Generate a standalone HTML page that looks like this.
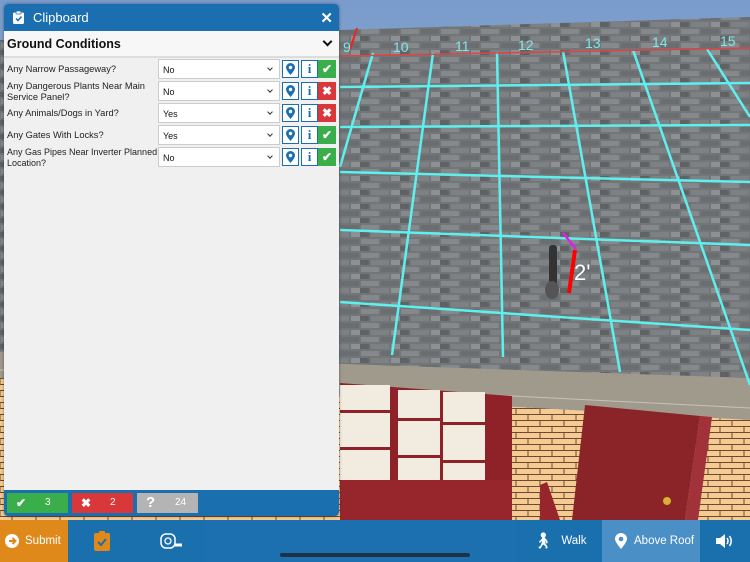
<!DOCTYPE html>
<html><head><meta charset="utf-8"><style>
*{box-sizing:border-box;margin:0;padding:0}
body{width:750px;height:562px;overflow:hidden;position:relative;font-family:"Liberation Sans",sans-serif;background:#888}
#bg{position:absolute;left:0;top:0}
.panel{position:absolute;left:4px;top:4px;width:335px;height:512px;background:#f0f0f0;border-radius:4px;overflow:hidden;box-shadow:0 0 3px rgba(0,0,0,.4)}
.hdr{height:27px;background:#1b6fb0;color:#fff;font-size:13px;display:flex;align-items:center;padding-left:9px}
.hdr .x{position:absolute;right:6px;top:5px;font-size:15px;font-weight:bold}
.sec{height:27px;background:#f7f7f7;border-bottom:2px solid #ddd;font-size:12.5px;font-weight:bold;display:flex;align-items:center;padding-left:3px;color:#111;position:relative}
.sec .ch{position:absolute;right:8px;top:7px;width:7px;height:7px;border-right:2px solid #111;border-bottom:2px solid #111;transform:rotate(45deg)}
.row{position:absolute;left:0;width:335px;height:22px}
.q{position:absolute;left:3px;font-size:9.3px;line-height:10.5px;color:#222;width:152px}
.sel{position:absolute;left:154px;top:1px;width:122px;height:20px;background:#fff;border:1px solid #ccc;font-size:9px;padding:5px 0 0 4px;color:#111}
.sel:after{content:"";position:absolute;right:7px;top:6px;width:3px;height:3px;border-right:1.5px solid #333;border-bottom:1.5px solid #333;transform:rotate(45deg)}
.b{position:absolute;top:2px;width:17px;height:18px;border:1.5px solid #1b6fb0;background:#fff;color:#1b6fb0;font-weight:bold;text-align:center;font-size:13px;line-height:15px;font-family:"Liberation Serif",serif}
.b svg{margin-top:2px}
.st{position:absolute;left:314px;top:2px;width:18px;height:18px;color:#fff;font-weight:bold;text-align:center;font-size:12px;line-height:18px}
.ok{background:#3aae4a}.no{background:#d9373a}
.foot{position:absolute;left:0;bottom:0;width:335px;height:26px;background:#1a70ae}
.fb{position:absolute;top:3px;height:20px;width:61px;color:#fff;font-size:10px;line-height:20px}
.fb i{font-style:normal;position:absolute;left:9px;font-weight:bold;font-size:12px}
.fb span{position:absolute;left:38px}
.bar{position:absolute;left:0;top:520px;width:750px;height:42px;background:#1a6fad;color:#fff;font-size:11.5px}
.bar div{position:absolute;top:0;height:42px;display:flex;align-items:center}
</style></head><body>
<svg id="bg" width="750" height="562" viewBox="0 0 750 562">
<defs>
<linearGradient id="sky" x1="0" y1="0" x2="0" y2="1"><stop offset="0" stop-color="#7a9ccc"/><stop offset="1" stop-color="#a9c0de"/></linearGradient>
<pattern id="sh" width="40" height="14" patternUnits="userSpaceOnUse"><rect width="40" height="14" fill="#727679"/><rect x="1" y="1" width="18" height="5" fill="#85898c"/><rect x="21" y="1" width="18" height="5" fill="#6a6e71"/><rect x="11" y="8" width="18" height="5" fill="#7d8184"/><rect x="-9" y="8" width="18" height="5" fill="#5f6366"/><rect x="31" y="8" width="18" height="5" fill="#8d9194"/></pattern>
<pattern id="br" width="24" height="12" patternUnits="userSpaceOnUse"><rect width="24" height="12" fill="#f5cb93"/><path d="M0 .5H24M0 6.5H24M12 0V6M0 6V12M24 6V12" stroke="#6a4a30" stroke-width="1"/></pattern>
</defs>
<rect width="750" height="562" fill="url(#sky)"/>
<polygon points="0,40 340,30 750,17 750,395 0,360" fill="url(#sh)"/>
<polygon points="0,352 750,378 750,420 0,378" fill="#9f9a8c"/>
<path d="M0 370L750 408" stroke="#c8c3b4" stroke-width="1"/>
<polygon points="0,378 750,420 750,562 0,562" fill="url(#br)"/>
<polygon points="340,383 512,396 512,520 340,520" fill="#8e2228"/>
<g fill="#f1ebe0"><rect x="340" y="385" width="50" height="25"/><rect x="340" y="413" width="50" height="34"/><rect x="340" y="450" width="50" height="30"/><rect x="398" y="390" width="42" height="28"/><rect x="443" y="392" width="42" height="30"/><rect x="398" y="421" width="42" height="34"/><rect x="443" y="425" width="42" height="35"/><rect x="398" y="458" width="42" height="32"/><rect x="443" y="463" width="42" height="32"/></g>
<rect x="340" y="480" width="172" height="40" fill="#97262c"/>
<polygon points="585,405 700,416 685,520 572,520" fill="#8b2428"/>
<polygon points="700,416 712,417 698,520 685,520" fill="#a1323a"/>
<polygon points="540,485 547,482 560,520 540,520" fill="#97262c"/>
<circle cx="667" cy="501" r="4" fill="#d9b030"/>
<g stroke="#5ef0ee" stroke-width="2.5" fill="none">
<path d="M373 53L340 167M433 53L392 355M497 52L503 357M563 51L620 372M633 50L750 385M707 49L750 117"/>
<path d="M340 87L750 83M340 127L750 125M340 172L750 182M340 230L750 245M340 302L750 330"/>
</g>
<path d="M340 56L750 48" stroke="#d44" stroke-width="1.5"/>
<path d="M350 50L357 28" stroke="#e22" stroke-width="2"/>
<g fill="#7fe8e6" font-size="14"><text x="343" y="52">9</text><text x="393" y="52">10</text><text x="455" y="51">11</text><text x="518" y="50">12</text><text x="585" y="48">13</text><text x="652" y="47">14</text><text x="720" y="46">15</text></g>
<rect x="549" y="245" width="8" height="45" rx="3" fill="#333"/>
<ellipse cx="552" cy="290" rx="7" ry="9" fill="#555"/>
<path d="M563 233L576 249" stroke="#e020e0" stroke-width="2.5"/>
<path d="M575 250L569 293" stroke="#f00" stroke-width="4"/>
<text x="574" y="280" fill="#fff" font-size="22">2'</text>
</svg>

<div class="panel">
<div class="hdr"><svg width="11" height="13" viewBox="0 0 11 13"><rect x="0" y="1.5" width="11" height="11.5" rx="1.5" fill="#fff"/><rect x="3" y="0" width="5" height="3" rx="1" fill="#fff" stroke="#1b6fb0" stroke-width=".8"/><path d="M3 7.5L5 9.5L8.5 5.5" stroke="#1b6fb0" stroke-width="1.5" fill="none"/></svg><span style="margin-left:9px">Clipboard</span><span class="x">✕</span></div>
<div class="sec">Ground Conditions<span class="ch"></span></div>
<div class="row" style="top:54px"><div class="q" style="top:6px">Any Narrow Passageway?</div><div class="sel">No</div><div class="b" style="left:278px"><svg width="9" height="12"><path d="M4.5 12C4.5 12 0 7 0 4.5A4.5 4.5 0 0 1 9 4.5C9 7 4.5 12 4.5 12Z" fill="#1b6fb0"/><circle cx="4.5" cy="4.5" r="1.7" fill="#fff"/></svg></div><div class="b" style="left:297px">i</div><div class="st ok">✔</div></div>
<div class="row" style="top:76px"><div class="q" style="top:1px">Any Dangerous Plants Near Main Service Panel?</div><div class="sel">No</div><div class="b" style="left:278px"><svg width="9" height="12"><path d="M4.5 12C4.5 12 0 7 0 4.5A4.5 4.5 0 0 1 9 4.5C9 7 4.5 12 4.5 12Z" fill="#1b6fb0"/><circle cx="4.5" cy="4.5" r="1.7" fill="#fff"/></svg></div><div class="b" style="left:297px">i</div><div class="st no">✖</div></div>
<div class="row" style="top:98px"><div class="q" style="top:6px">Any Animals/Dogs in Yard?</div><div class="sel">Yes</div><div class="b" style="left:278px"><svg width="9" height="12"><path d="M4.5 12C4.5 12 0 7 0 4.5A4.5 4.5 0 0 1 9 4.5C9 7 4.5 12 4.5 12Z" fill="#1b6fb0"/><circle cx="4.5" cy="4.5" r="1.7" fill="#fff"/></svg></div><div class="b" style="left:297px">i</div><div class="st no">✖</div></div>
<div class="row" style="top:120px"><div class="q" style="top:6px">Any Gates With Locks?</div><div class="sel">Yes</div><div class="b" style="left:278px"><svg width="9" height="12"><path d="M4.5 12C4.5 12 0 7 0 4.5A4.5 4.5 0 0 1 9 4.5C9 7 4.5 12 4.5 12Z" fill="#1b6fb0"/><circle cx="4.5" cy="4.5" r="1.7" fill="#fff"/></svg></div><div class="b" style="left:297px">i</div><div class="st ok">✔</div></div>
<div class="row" style="top:142px"><div class="q" style="top:1px;font-size:9px;width:153px">Any Gas Pipes Near Inverter Planned Location?</div><div class="sel">No</div><div class="b" style="left:278px"><svg width="9" height="12"><path d="M4.5 12C4.5 12 0 7 0 4.5A4.5 4.5 0 0 1 9 4.5C9 7 4.5 12 4.5 12Z" fill="#1b6fb0"/><circle cx="4.5" cy="4.5" r="1.7" fill="#fff"/></svg></div><div class="b" style="left:297px">i</div><div class="st ok">✔</div></div>
<div class="foot">
<div class="fb ok" style="left:3px"><i>✔</i><span>3</span></div>
<div class="fb no" style="left:68px"><i>✖</i><span>2</span></div>
<div class="fb" style="left:133px;background:#b4b4b4"><i style="font-size:15px">?</i><span>24</span></div>
</div>
</div>

<div class="bar">
<div style="left:0;width:68px;background:#e0891b;padding-left:5px"><svg width="14" height="14"><circle cx="7" cy="7" r="7" fill="#fff"/><path d="M4 7H10M7.5 4L10.5 7L7.5 10" stroke="#e0891b" stroke-width="2" fill="none"/></svg><span style="margin-left:6px">Submit</span></div>
<div style="left:94px"><svg width="16" height="20"><rect x="0" y="2" width="16" height="18" rx="2" fill="#e0891b"/><rect x="5" y="0" width="6" height="4" rx="1" fill="#e0891b"/><path d="M4 11L7 14L12 8" stroke="#1a6fad" stroke-width="2" fill="none"/></svg></div>
<div style="left:160px"><svg width="24" height="16"><rect x="1" y="1" width="14" height="14" rx="5" fill="none" stroke="#fff" stroke-width="1.5"/><circle cx="8" cy="8" r="3" fill="none" stroke="#fff" stroke-width="1.3"/><path d="M15 12H22" stroke="#fff" stroke-width="3"/></svg></div>
<div style="left:205px;width:313px;background:#1d70b0"></div>
<div style="left:280px;top:33px;width:190px;height:4px;border-radius:2px;background:#1f3047"></div>
<div style="left:533px"><span style="font-size:16px">🚶︎</span><span style="margin-left:8px">Walk</span></div>
<div style="left:602px;width:98px;background:#4a8fc6;padding-left:13px"><svg width="12" height="16"><path d="M6 16C6 16 0 9 0 6A6 6 0 0 1 12 6C12 9 6 16 6 16Z" fill="#fff"/><circle cx="6" cy="6" r="2.3" fill="#4a8fc6"/></svg><span style="margin-left:7px">Above Roof</span></div>
<div style="left:716px"><svg width="18" height="14"><path d="M0 4H4L9 0V14L4 10H0Z" fill="#fff"/><path d="M11 4Q13 7 11 10M13.5 2Q17 7 13.5 12" stroke="#fff" stroke-width="1.5" fill="none"/></svg></div>
</div>
</body></html>
